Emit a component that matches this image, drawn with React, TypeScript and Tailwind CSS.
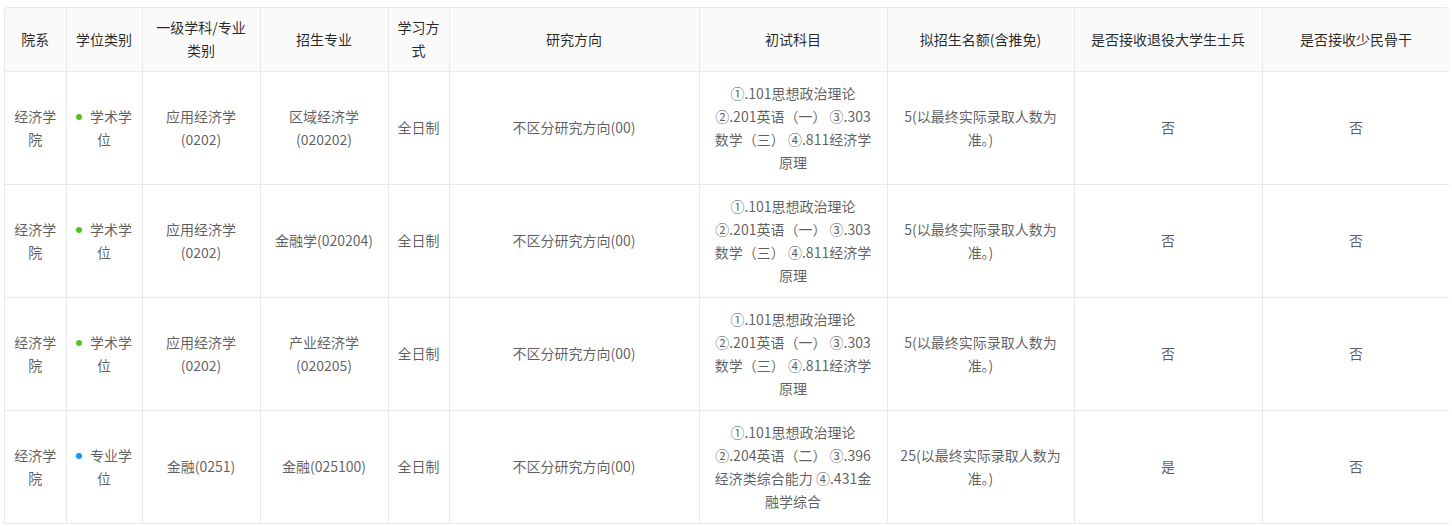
import React from "react";

type Row = {
  dept: string[];
  degree: { color: string; lines: string[] };
  subject: string[];
  major: string[];
  mode: string;
  direction: string;
  exam: string[];
  quota: string[];
  veteran: string;
  minority: string;
};

const columns: { title: string[]; width: string }[] = [
  { title: ["院系"], width: "w-[61px]" },
  { title: ["学位类别"], width: "w-[76px]" },
  { title: ["一级学科/专业", "类别"], width: "w-[118px]" },
  { title: ["招生专业"], width: "w-[128px]" },
  { title: ["学习方", "式"], width: "w-[61px]" },
  { title: ["研究方向"], width: "w-[250px]" },
  { title: ["初试科目"], width: "w-[188px]" },
  { title: ["拟招生名额(含推免)"], width: "w-[187px]" },
  { title: ["是否接收退役大学生士兵"], width: "w-[188px]" },
  { title: ["是否接收少民骨干"], width: "w-[188px]" },
];

const academicExam = ["①.101思想政治理论", "②.201英语（一） ③.303", "数学（三） ④.811经济学", "原理"];

const rows: Row[] = [
  {
    dept: ["经济学", "院"],
    degree: { color: "bg-[#52c41a]", lines: ["学术学", "位"] },
    subject: ["应用经济学", "(0202)"],
    major: ["区域经济学", "(020202)"],
    mode: "全日制",
    direction: "不区分研究方向(00)",
    exam: academicExam,
    quota: ["5(以最终实际录取人数为", "准。)"],
    veteran: "否",
    minority: "否",
  },
  {
    dept: ["经济学", "院"],
    degree: { color: "bg-[#52c41a]", lines: ["学术学", "位"] },
    subject: ["应用经济学", "(0202)"],
    major: ["金融学(020204)"],
    mode: "全日制",
    direction: "不区分研究方向(00)",
    exam: academicExam,
    quota: ["5(以最终实际录取人数为", "准。)"],
    veteran: "否",
    minority: "否",
  },
  {
    dept: ["经济学", "院"],
    degree: { color: "bg-[#52c41a]", lines: ["学术学", "位"] },
    subject: ["应用经济学", "(0202)"],
    major: ["产业经济学", "(020205)"],
    mode: "全日制",
    direction: "不区分研究方向(00)",
    exam: academicExam,
    quota: ["5(以最终实际录取人数为", "准。)"],
    veteran: "否",
    minority: "否",
  },
  {
    dept: ["经济学", "院"],
    degree: { color: "bg-[#1890ff]", lines: ["专业学", "位"] },
    subject: ["金融(0251)"],
    major: ["金融(025100)"],
    mode: "全日制",
    direction: "不区分研究方向(00)",
    exam: ["①.101思想政治理论", "②.204英语（二） ③.396", "经济类综合能力 ④.431金", "融学综合"],
    quota: ["25(以最终实际录取人数为", "准。)"],
    veteran: "是",
    minority: "否",
  },
];

function Lines({ lines }: { lines: string[] }) {
  return (
    <>
      {lines.map((l, i) => (
        <div key={i} className="whitespace-pre">
          {l}
        </div>
      ))}
    </>
  );
}

const cell = "border border-[#e8e8e8] px-2 py-[10px] text-center align-middle";

export default function App() {
  return (
    <div
      className="bg-white pl-[4px] pt-[7px] min-h-screen"
      style={{ fontFamily: '"Noto Sans CJK SC", "Noto Sans", sans-serif' }}
    >
      <div className="w-[1445px] rounded-t-[4px] overflow-hidden border-t border-l border-[#e8e8e8]">
        <table className="w-full table-fixed border-collapse text-[14px] leading-[23px] text-[rgba(0,0,0,0.65)]">
          <colgroup>
            {columns.map((c, i) => (
              <col key={i} className={c.width} />
            ))}
          </colgroup>
          <thead>
            <tr className="bg-[#fafafa] text-[rgba(0,0,0,0.85)]">
              {columns.map((c, i) => (
                <th key={i} className="border border-t-0 border-[#e8e8e8] px-2 py-[8px] h-[63px] font-normal text-center align-middle first:border-l-0">
                  <Lines lines={c.title} />
                </th>
              ))}
            </tr>
          </thead>
          <tbody>
            {rows.map((r, i) => (
              <tr key={i} className="h-[113px]">
                <td className={`${cell} border-l-0`}>
                  <Lines lines={r.dept} />
                </td>
                <td className={cell}>
                  <div className="whitespace-pre">
                    <span className={`inline-block w-[6px] h-[6px] rounded-full ${r.degree.color} align-middle mr-2 relative -top-px`} />
                    {r.degree.lines[0]}
                  </div>
                  <div>{r.degree.lines[1]}</div>
                </td>
                <td className={cell}>
                  <Lines lines={r.subject} />
                </td>
                <td className={cell}>
                  <Lines lines={r.major} />
                </td>
                <td className={cell}>{r.mode}</td>
                <td className={cell}>{r.direction}</td>
                <td className={cell}>
                  <Lines lines={r.exam} />
                </td>
                <td className={cell}>
                  <Lines lines={r.quota} />
                </td>
                <td className={cell}>{r.veteran}</td>
                <td className={cell}>{r.minority}</td>
              </tr>
            ))}
          </tbody>
        </table>
      </div>
    </div>
  );
}
